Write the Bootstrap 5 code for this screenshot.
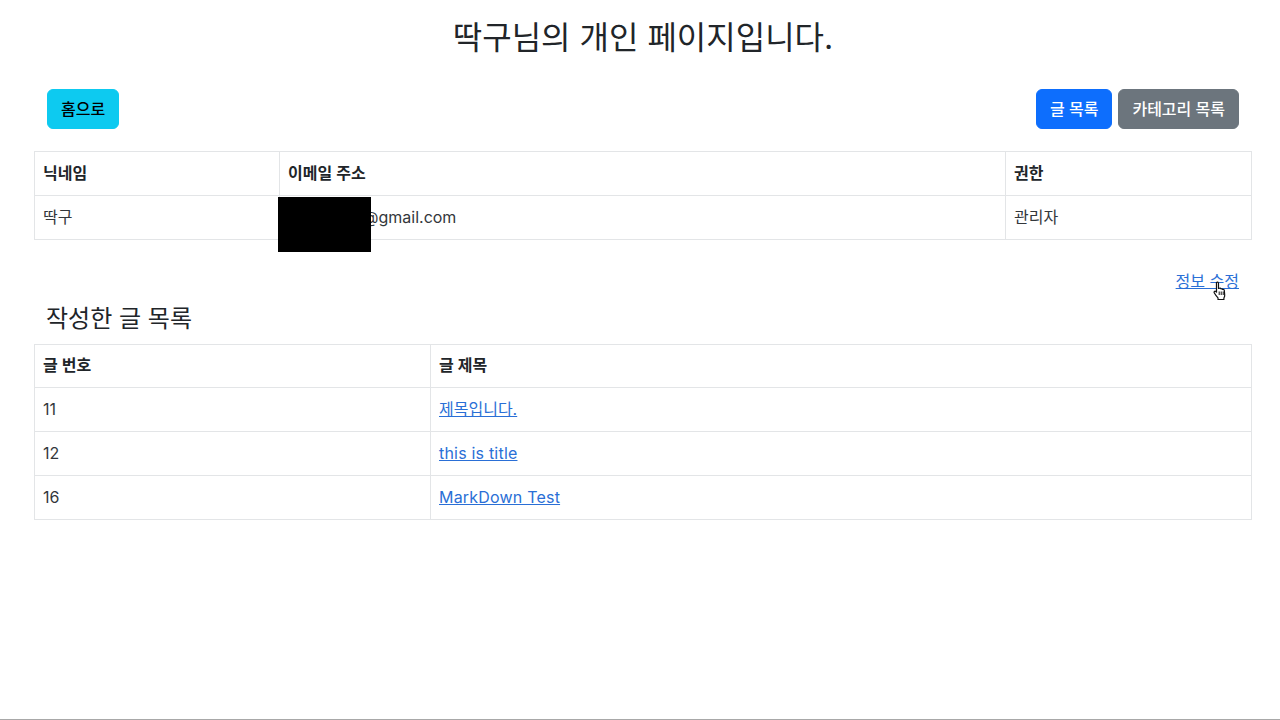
<!DOCTYPE html>
<html lang="ko">
<head>
    <meta charset="UTF-8">
    <meta name="viewport" content="width=device-width, initial-scale=1.0">
    <title>개인 페이지</title>
    <link href="https://cdn.jsdelivr.net/npm/bootstrap@5.3.0/dist/css/bootstrap.min.css" rel="stylesheet">
    <style>
        body {
            font-family: "Inter", "Noto Sans CJK KR", sans-serif;
            color: #212529;
            height: 720px;
            overflow: hidden;
            border-bottom: 1px solid #a8a8a8;
        }

        .page-wrap {
            padding: 0 28px 0 34px;
        }

        .page-title {
            font-size: 32px;
            font-weight: 400;
            line-height: 40px;
            margin: 18px 0 31px;
            text-align: center;
        }

        .top-actions {
            padding: 0 13px 0 13px;
            width: 1218px;
            height: 40px;
            margin-bottom: 22px;
        }

        .top-actions .btn {
            font-size: 16px;
            font-weight: 500;
            padding: 0 13px;
            height: 40px;
            line-height: 38px;
            border-radius: 6px;
        }

        .btn-pair {
            gap: 6px;
        }

        .info-table {
            table-layout: fixed;
            width: 1217px;
            margin-bottom: 0;
            border-color: #e3e5e7;
        }

        .info-table th,
        .info-table td {
            height: 43.8px;
            padding: 0 8px 1px;
            vertical-align: middle;
            font-size: 16px;
            line-height: 24px;
        }

        .info-table td {
            color: #33373b;
        }

        .info-table th {
            font-weight: 600;
        }

        .email-cell {
            position: relative;
        }

        .redact-box {
            position: absolute;
            left: -2px;
            top: 1px;
            width: 93px;
            height: 55px;
            background: #000;
        }

        .email-text {
            padding-left: 75px;
        }

        .edit-row {
            position: relative;
            padding: 0 13px;
            width: 1218px;
            height: 24px;
            margin-top: 29px;
        }

        .edit-row a {
            font-size: 16px;
            color: #2a6fd6;
        }

        .hand-cursor {
            position: absolute;
            left: 1178px;
            top: 12px;
        }

        .section-title {
            font-size: 24px;
            font-weight: 400;
            line-height: 30px;
            margin: 11px 0 10px 12px;
        }

        .info-table a {
            color: #2a6fd6;
        }

        .latin-text {
            letter-spacing: .2px;
        }
    </style>
</head>
<body>
    <div class="page-wrap">
        <h2 class="page-title">딱구님의 개인 페이지입니다.</h2>

        <div class="top-actions d-flex justify-content-between">
            <a href="#" class="btn btn-info">홈으로</a>
            <div class="d-flex btn-pair">
                <a href="#" class="btn btn-primary">글 목록</a>
                <a href="#" class="btn btn-secondary">카테고리 목록</a>
            </div>
        </div>

        <table class="table table-bordered info-table">
            <colgroup>
                <col style="width: 245px">
                <col style="width: 726px">
                <col style="width: 246px">
            </colgroup>
            <thead>
                <tr>
                    <th>닉네임</th>
                    <th>이메일 주소</th>
                    <th>권한</th>
                </tr>
            </thead>
            <tbody>
                <tr>
                    <td>딱구</td>
                    <td class="email-cell"><span class="redact-box"></span><span class="email-text">@gmail.com</span></td>
                    <td>관리자</td>
                </tr>
            </tbody>
        </table>

        <div class="edit-row d-flex justify-content-end">
            <a href="#">정보 수정</a>
            <svg class="hand-cursor" width="16" height="20" viewBox="0 0 16 20">
                <path d="M4.500 1.500c.8-.8 2-.4 2 .8v5.200l1-.3c.7-.2 1.300.2 1.500.7.6-.3 1.400-.1 1.700.6.7-.3 1.500.1 1.600.9l.4 4.600c.1 1.200-.3 2.200-.8 3v1.500H6v-1.600c-1.200-1.300-2.700-3.300-3.800-5.200-.6-1 .6-2 1.600-1.200l.7.700V2.800c0-.5-.2-1 0-1.300z" fill="#fff" stroke="#111" stroke-width="1.200" stroke-linejoin="round"/>
                <path d="M7.200 10.500v3.500M9.200 10.500v3.500M11.200 10.500v3.500" stroke="#111" stroke-width="1" fill="none"/>
            </svg>
        </div>

        <h4 class="section-title">작성한 글 목록</h4>

        <table class="table table-bordered info-table">
            <colgroup>
                <col style="width: 396px">
                <col style="width: 821px">
            </colgroup>
            <thead>
                <tr>
                    <th>글 번호</th>
                    <th>글 제목</th>
                </tr>
            </thead>
            <tbody>
                <tr>
                    <td>11</td>
                    <td><a href="#">제목입니다.</a></td>
                </tr>
                <tr>
                    <td>12</td>
                    <td><a href="#" class="latin-text">this is title</a></td>
                </tr>
                <tr>
                    <td>16</td>
                    <td><a href="#" class="latin-text">MarkDown Test</a></td>
                </tr>
            </tbody>
        </table>
    </div>

    <script src="https://cdn.jsdelivr.net/npm/bootstrap@5.3.0/dist/js/bootstrap.bundle.min.js"></script>
</body>
</html>
